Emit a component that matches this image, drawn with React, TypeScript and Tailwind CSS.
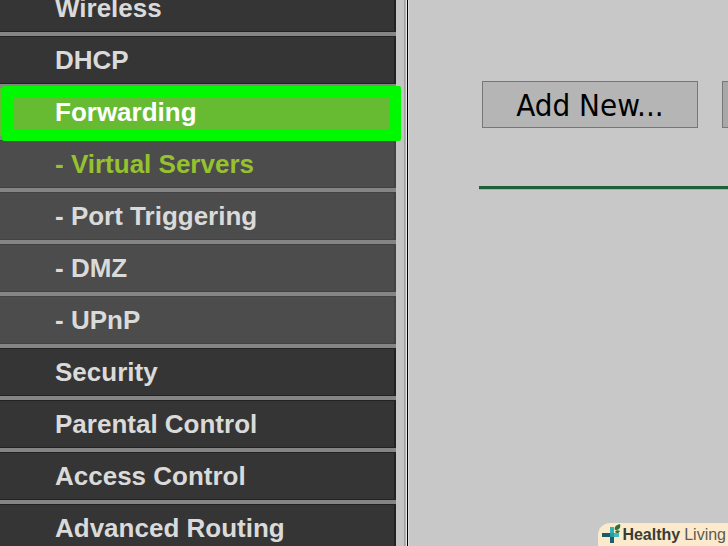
import React from 'react';

interface MenuItem {
    label: string;
    kind: 'main' | 'sub' | 'current' | 'open';
}

const menuItems: MenuItem[] = [
    { label: 'Wireless', kind: 'main' },
    { label: 'DHCP', kind: 'main' },
    { label: 'Forwarding', kind: 'open' },
    { label: '- Virtual Servers', kind: 'current' },
    { label: '- Port Triggering', kind: 'sub' },
    { label: '- DMZ', kind: 'sub' },
    { label: '- UPnP', kind: 'sub' },
    { label: 'Security', kind: 'main' },
    { label: 'Parental Control', kind: 'main' },
    { label: 'Access Control', kind: 'main' },
    { label: 'Advanced Routing', kind: 'main' },
];

const kindStyles = {
    main: 'bg-[#353535] text-[#dadada] border-[#222]',
    sub: 'bg-[#4c4c4c] text-[#dadada] border-[#424242]',
    current: 'bg-[#4c4c4c] text-[#96c22e] border-[#424242]',
    open: 'bg-[#66bb33] text-white border-[#66bb33]',
};

const MenuLink: React.FC<{ item: MenuItem }> = ({ item }) => (
    <li className="relative h-[52px] border-b-4 border-[#858585]">
        <a href="#" className={`block h-full border-y border-r-2 pl-[55px] text-[26px] leading-[46px] font-bold whitespace-nowrap ${kindStyles[item.kind]}`}>
            {item.label}
        </a>
        {item.kind === 'open' && (
            <span className="pointer-events-none absolute -top-[2px] -right-[5px] -bottom-[5px] left-[2px] z-10 rounded-xs border-[11px] border-[#00f800]" />
        )}
    </li>
);

const Divider = () => (
    <div className="flex shrink-0">
        <div className="w-2 bg-[#c4c4c4]" />
        <div className="w-px bg-[#a0a0a0]" />
        <div className="w-px bg-[#b4b4b4]" />
        <div className="w-px bg-[#e4e4e4]" />
        <div className="w-px bg-black" />
        <div className="w-px bg-[#dedede]" />
    </div>
);

const Badge = () => (
    <div className="absolute right-0 bottom-0 flex h-[23px] items-center rounded-tl-xl bg-[#fbeacb] pr-[2px] pl-1 text-[16px] leading-[22px] text-[#3a3a38]">
        <svg viewBox="0 0 20 22" className="h-[22px] w-5" aria-hidden="true">
            <path d="M8 3h4v7H8z" fill="#2fb3b5" />
            <path d="M0 9h8v4H0z" fill="#1e5a66" />
            <path d="M8 9h9v4H8z" fill="#3cbcbc" />
            <path d="M8 13h4v6H8z" fill="#1f5f68" />
            <path d="M8 9h4v4H8z" fill="#299ba0" />
            <path d="M13 6c-1-3 1-5 5-6c1 4-1 6-5 6z" fill="#2f7035" />
            <path d="M13 8c1-2 3-2 5-1c-1 2-3 3-5 1z" fill="#2f7035" />
        </svg>
        <span className="font-bold">Healthy</span>
        <span className="ml-1 text-[#5c5a54]">Living</span>
    </div>
);

export default function App() {
    return (
        <div className="relative flex h-screen overflow-hidden bg-[#c8c8c8] font-['Liberation_Sans',Arial,sans-serif]">
            <nav className="w-[396px] shrink-0">
                <ul className="-mt-4">
                    {menuItems.map(item => <MenuLink key={item.label} item={item} />)}
                </ul>
            </nav>
            <Divider />
            <main className="min-w-0 flex-1 overflow-hidden pt-[81px] pl-[73px]">
                <div className="flex gap-6">
                    <button className="h-[47px] w-[216px] shrink-0 border border-[#777] bg-[#b5b5b5] pt-[2px] font-['DejaVu_Sans_Condensed','DejaVu_Sans',Tahoma,sans-serif] text-[31px] leading-[43px] text-black">
                        Add New...
                    </button>
                    <button aria-label="Enable All" className="h-[47px] w-[216px] shrink-0 border border-[#777] bg-[#a8a8a8]" />
                </div>
                <hr className="mt-[58px] -ml-[3px] h-[4px] border-t-3 border-b border-t-[#1c6139] border-b-[#8fbf9f]" />
            </main>
            <Badge />
        </div>
    );
}
